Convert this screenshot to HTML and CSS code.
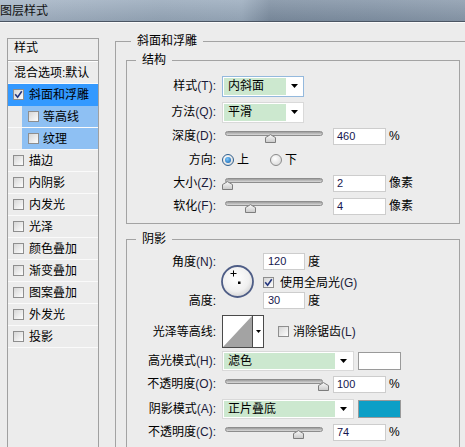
FILE: index.html
```html
<!DOCTYPE html>
<html>
<head>
<meta charset="utf-8">
<title>图层样式</title>
<link rel="stylesheet" href="styles.css">
</head>
<body>
<div class="titlebar"><span class="title">图层样式</span></div>
<div class="main">
  <div class="list">
    <div class="list-head">样式</div>
    <div class="item plain"><span>混合选项:默认</span></div>
    <div class="item sel"><span class="cb"><svg width="9" height="9" viewBox="0 0 9 9"><path d="M1.2 4.2 L3.6 7.2 L7.8 1.2" fill="none" stroke="#24367e" stroke-width="1.6"/></svg></span><span class="txt">斜面和浮雕</span></div>
    <div class="item sub"><span class="cb"></span><span class="txt">等高线</span></div>
    <div class="item sub"><span class="cb"></span><span class="txt">纹理</span></div>
    <div class="item"><span class="cb"></span><span class="txt">描边</span></div>
    <div class="item"><span class="cb"></span><span class="txt">内阴影</span></div>
    <div class="item"><span class="cb"></span><span class="txt">内发光</span></div>
    <div class="item"><span class="cb"></span><span class="txt">光泽</span></div>
    <div class="item"><span class="cb"></span><span class="txt">颜色叠加</span></div>
    <div class="item"><span class="cb"></span><span class="txt">渐变叠加</span></div>
    <div class="item"><span class="cb"></span><span class="txt">图案叠加</span></div>
    <div class="item"><span class="cb"></span><span class="txt">外发光</span></div>
    <div class="item"><span class="cb"></span><span class="txt">投影</span></div>
  </div>

  <div class="outer">
    <div class="legend">斜面和浮雕</div>

    <div class="box struct">
      <div class="legend">结构</div>

      <div class="row r1">
        <span class="lbl">样式<span class="lat">(T):</span></span>
        <div class="select s1 focus"><span class="val">内斜面</span><span class="arr"><svg width="7" height="4" viewBox="0 0 7 4"><path d="M0 0H7L3.5 4Z" fill="#000"/></svg></span></div>
      </div>
      <div class="row r2">
        <span class="lbl">方法<span class="lat">(Q):</span></span>
        <div class="select s1"><span class="val">平滑</span><span class="arr"><svg width="7" height="4" viewBox="0 0 7 4"><path d="M0 0H7L3.5 4Z" fill="#000"/></svg></span></div>
      </div>
      <div class="row r3">
        <span class="lbl">深度<span class="lat">(D):</span></span>
        <div class="slider"><div class="track"></div><svg class="thumb" style="left:43px" width="11" height="9" viewBox="0 0 11 9"><defs><linearGradient id="tg1" x1="0" y1="0" x2="0" y2="1"><stop offset="0" stop-color="#fafafa"/><stop offset="1" stop-color="#c9c9c9"/></linearGradient></defs><path d="M0.5 8.5V3.6L5.5 0.6L10.5 3.6V8.5Z" fill="url(#tg1)" stroke="#7d7d7d"/></svg></div>
        <span class="num">460</span><span class="unit">%</span>
      </div>
      <div class="row r4">
        <span class="lbl">方向:</span>
        <span class="radio on"></span><span class="rtxt">上</span>
        <span class="radio gap"></span><span class="rtxt">下</span>
      </div>
      <div class="row r5">
        <span class="lbl">大小<span class="lat">(Z):</span></span>
        <div class="slider"><div class="track"></div><svg class="thumb" style="left:0px" width="11" height="9" viewBox="0 0 11 9"><path d="M0.5 8.5V3.6L5.5 0.6L10.5 3.6V8.5Z" fill="url(#tg1)" stroke="#7d7d7d"/></svg></div>
        <span class="num">2</span><span class="unit">像素</span>
      </div>
      <div class="row r6">
        <span class="lbl">软化<span class="lat">(F):</span></span>
        <div class="slider"><div class="track"></div><svg class="thumb" style="left:23px" width="11" height="9" viewBox="0 0 11 9"><path d="M0.5 8.5V3.6L5.5 0.6L10.5 3.6V8.5Z" fill="url(#tg1)" stroke="#7d7d7d"/></svg></div>
        <span class="num">4</span><span class="unit">像素</span>
      </div>
    </div>

    <div class="box shadow">
      <div class="legend">阴影</div>

      <div class="angle">
        <span class="lbl a-lbl1">角度<span class="lat">(N):</span></span>
        <svg class="dial" width="35" height="35" viewBox="0 0 35 35">
          <defs><radialGradient id="dg" cx="45%" cy="40%" r="60%"><stop offset="0" stop-color="#ffffff"/><stop offset="0.7" stop-color="#f0f0f0"/><stop offset="1" stop-color="#d6d6d6"/></radialGradient></defs>
          <circle cx="16.5" cy="17.5" r="15.5" fill="url(#dg)" stroke="#4e5d86" stroke-width="1.8"/>
          <path d="M9.5 9.5H15.5M12.5 6.5V12.5" stroke="#000" stroke-width="1"/>
          <rect x="17" y="17.5" width="2.5" height="2.5" fill="#000"/>
        </svg>
        <div class="a-in1"><span class="num short">120</span><span class="unit">度</span></div>
        <div class="a-cb"><span class="cb"><svg width="9" height="9" viewBox="0 0 9 9"><path d="M1.2 4.2 L3.6 7.2 L7.8 1.2" fill="none" stroke="#24367e" stroke-width="1.6"/></svg></span><span class="ctxt">使用全局光<span class="lat">(G)</span></span></div>
        <span class="lbl a-lbl2">高度:</span>
        <div class="a-in2"><span class="num short">30</span><span class="unit">度</span></div>
      </div>

      <div class="row contour">
        <span class="lbl">光泽等高线:</span>
        <svg class="curve" width="42" height="33" viewBox="0 0 42 33">
          <rect x="0.5" y="0.5" width="41" height="32" fill="#fff" stroke="#4a4a4a"/>
          <path d="M1 32L30 1V32Z" fill="#a3a3a3"/>
          <path d="M30.5 1V32" stroke="#4a4a4a"/>
          <path d="M34 15H39L36.5 18Z" fill="#000"/>
        </svg>
        <span class="cb cb-aa"></span><span class="ctxt">消除锯齿<span class="lat">(L)</span></span>
      </div>

      <div class="row m-row hl">
        <span class="lbl">高光模式<span class="lat">(H):</span></span>
        <div class="select s2"><span class="val">滤色</span><span class="arr"><svg width="7" height="4" viewBox="0 0 7 4"><path d="M0 0H7L3.5 4Z" fill="#000"/></svg></span></div>
        <span class="swatch white"></span>
      </div>
      <div class="row m-row op1">
        <span class="lbl">不透明度<span class="lat">(O):</span></span>
        <div class="slider"><div class="track"></div><svg class="thumb" style="left:96px" width="11" height="9" viewBox="0 0 11 9"><path d="M0.5 8.5V3.6L5.5 0.6L10.5 3.6V8.5Z" fill="url(#tg1)" stroke="#7d7d7d"/></svg></div>
        <span class="num">100</span><span class="unit">%</span>
      </div>
      <div class="row m-row sm">
        <span class="lbl">阴影模式<span class="lat">(A):</span></span>
        <div class="select s2"><span class="val">正片叠底</span><span class="arr"><svg width="7" height="4" viewBox="0 0 7 4"><path d="M0 0H7L3.5 4Z" fill="#000"/></svg></span></div>
        <span class="swatch blue"></span>
      </div>
      <div class="row m-row op2">
        <span class="lbl">不透明度<span class="lat">(C):</span></span>
        <div class="slider"><div class="track"></div><svg class="thumb" style="left:71px" width="11" height="9" viewBox="0 0 11 9"><path d="M0.5 8.5V3.6L5.5 0.6L10.5 3.6V8.5Z" fill="url(#tg1)" stroke="#7d7d7d"/></svg></div>
        <span class="num">74</span><span class="unit">%</span>
      </div>
    </div>
  </div>
</div>
</body>
</html>
```

FILE: styles.css
```css
* { box-sizing: border-box; }
html, body { margin: 0; padding: 0; }
body {
  width: 465px;
  height: 447px;
  overflow: hidden;
  background: #ececec;
  font-family: "Liberation Sans", "Noto Sans CJK SC", sans-serif;
  font-size: 12px;
  color: #000;
}

/* title bar */
.titlebar {
  height: 22px;
  border-bottom: 1px solid #4b5563;
  background:
    linear-gradient(180deg, rgba(255,255,255,0.14), rgba(0,0,0,0.06)),
    linear-gradient(90deg, #a6b5c6 0%, #97a8ba 35%, #9aabbd 52%, #7d8ea1 58%, #8293a6 80%, #8a9aac 100%);
  display: flex;
  align-items: center;
}
.title { margin-left: 0; line-height: 14px; color: #111; }

.main {
  display: flex;
  align-items: flex-start;
  border-top: 1px solid #fbfbfb;
}

/* left style list */
.list {
  flex: none;
  margin: 15px 0 0 7px;
  width: 92px;
  height: 430px;
  border: 1px solid #a0a0a0;
}
.list-head {
  height: 22px;
  padding: 0 0 3px 6px;
  display: flex;
  align-items: center;
  border-bottom: 1px solid #a6a6a6;
  box-shadow: 0 1px 0 #fff;
  margin-bottom: 1px;
  line-height: 14px;
}
.item {
  height: 22px;
  display: flex;
  align-items: center;
  padding-left: 5px;
  border-bottom: 1px solid #fafafa;
  line-height: 14px;
}
.item.plain { padding-left: 6px; }
.item.sel { background: #3399ff; border-bottom-color: #3399ff; }
.item.sub {
  background: linear-gradient(90deg, #ececec 14px, #8ec0f3 14px);
  padding-left: 20px;
}
.item .txt { margin-left: 5px; }
.item.sub .txt { margin-left: 4px; }

.cb {
  flex: none;
  width: 11px;
  height: 11px;
  border: 1px solid #8e8e8e;
  background: linear-gradient(135deg, #d6d6d6, #fdfdfd);
  display: flex;
  align-items: center;
  justify-content: center;
}

/* right groups */
.outer {
  flex: none;
  margin: 18px 0 0 16px;
  width: 360px;
  height: 420px;
  border-left: 1px solid #a3a3a3;
  border-top: 1px solid #a3a3a3;
}
.legend {
  display: block;
  width: fit-content;
  height: 14px;
  margin: -8px 0 0 15px;
  padding: 0 6px;
  line-height: 14px;
  background: #ececec;
}
.box {
  margin-left: 10px;
  width: 334px;
  border: 1px solid #a3a3a3;
}
.box .legend { margin-left: 9px; }
.struct { margin-top: 12px; padding-bottom: 5px; }
.shadow { margin-top: 15px; height: 230px; }

.row { display: flex; align-items: center; }
.lbl {
  flex: none;
  width: 95px;
  padding-right: 6px;
  text-align: right;
  white-space: nowrap;
  line-height: 14px;
}
.lat { color: #1c1c3c; }

.r1 { height: 22px; margin-top: 8px; }
.r2 { height: 22px; margin-top: 4px; }
.r3 { height: 24px; margin-top: 1px; }
.r4 { height: 24px; }
.r5 { height: 22px; }
.r6 { height: 24px; }

/* select */
.select {
  flex: none;
  display: flex;
  height: 21px;
  padding: 1px;
  border: 1px solid #d9d9d9;
  background: #fff;
}
.select.focus { border-color: #94b9dd; }
.select .val {
  flex: none;
  background: #cce8cf;
  padding-left: 4px;
  display: flex;
  align-items: center;
  line-height: 14px;
}
.select .arr {
  flex: 1;
  display: flex;
  align-items: center;
  justify-content: center;
}
.s1 { width: 82px; }
.s1 .val { width: 62px; }
.s2 { width: 132px; height: 20px; }
.s2 .val { width: 111px; }

/* slider */
.slider {
  flex: none;
  position: relative;
  width: 104px;
  height: 20px;
}
.track {
  margin: 5px 3px 0;
  height: 5px;
  border: 1px solid #8d8d8d;
  border-radius: 3px;
  background: linear-gradient(#9c9c9c, #dadada);
}
.thumb { position: absolute; top: 8px; }

.num {
  flex: none;
  width: 53px;
  height: 17px;
  margin-left: 7px;
  padding-left: 3px;
  border: 1px solid #cdcdcd;
  background: #fff;
  font-size: 11px;
  line-height: 15px;
  color: #16164e;
}
.num.short { width: 42px; margin-left: 0; padding-left: 4px; }
.unit { margin-left: 3px; line-height: 14px; }

/* radio */
.radio {
  flex: none;
  width: 12px;
  height: 12px;
  border-radius: 50%;
  border: 1px solid #8a8a8a;
  background: radial-gradient(circle at 40% 35%, #ffffff, #d2d2d2);
  display: flex;
  align-items: center;
  justify-content: center;
}
.radio.on { border-color: #2f5f8e; }
.radio.on::after {
  content: "";
  width: 6px;
  height: 6px;
  border-radius: 50%;
  background: radial-gradient(circle at 40% 35%, #7cc8ff, #0b5aa6);
}
.radio.gap { margin-left: 21px; }
.rtxt { margin-left: 3px; line-height: 14px; }

/* angle block */
.angle {
  display: grid;
  grid-template-columns: 95px 41px auto;
  grid-template-rows: 17px 22px 17px;
  margin-top: 7px;
}
.a-lbl1 { grid-column: 1; grid-row: 1; align-self: center; }
.a-lbl2 { grid-column: 1; grid-row: 3; align-self: center; }
.dial { grid-column: 2; grid-row: 1 / 4; align-self: center; margin-left: -1px; }
.a-in1 { grid-column: 3; grid-row: 1; display: flex; align-items: center; }
.a-cb { grid-column: 3; grid-row: 2; display: flex; align-items: center; padding-top: 3px; }
.a-in2 { grid-column: 3; grid-row: 3; display: flex; align-items: center; }
.ctxt { margin-left: 6px; line-height: 14px; }

.contour { height: 33px; margin-top: 6px; }
.curve { flex: none; }
.cb-aa { margin-left: 14px; }
.contour .ctxt { margin-left: 4px; }

.m-row { height: 20px; margin-top: 3px; }
.sm { margin-top: 5px; }

.swatch {
  flex: none;
  width: 43px;
  height: 18px;
  margin-left: 4px;
  border: 1px solid #9a9a9a;
}
.swatch.white { background: #ffffff; }
.swatch.blue { background: #0c9fc6; }
```
